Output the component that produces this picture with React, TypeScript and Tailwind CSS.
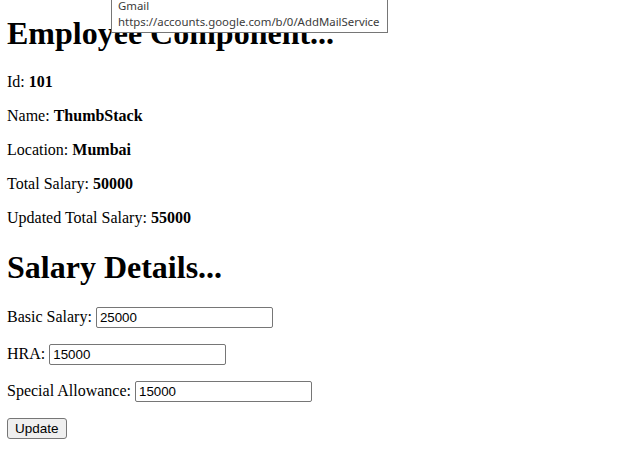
import React from "react";

export default function App() {
  const serif = { fontFamily: '"Liberation Serif", "Times New Roman", serif' };
  return (
    <div className="relative min-h-[471px] bg-white text-black" style={serif}>
      <div className="pl-[7px] pr-2 pt-[15px]">
        <h1 className="m-0 mb-[21.44px] text-[32px] font-bold leading-[normal]">Employee Component...</h1>
        <p className="my-4 text-base leading-[normal]">Id: <b>101</b></p>
        <p className="my-4 text-base leading-[normal]">Name: <b>ThumbStack</b></p>
        <p className="my-4 text-base leading-[normal]">Location: <b>Mumbai</b></p>
        <p className="my-4 text-base leading-[normal]">Total Salary: <b>50000</b></p>
        <p className="my-4 text-base leading-[normal]">Updated Total Salary: <b>55000</b></p>
        <h1 className="my-[21.44px] text-[32px] font-bold leading-[normal]">Salary Details...</h1>
        {[
          ["Basic Salary:", "25000"],
          ["HRA:", "15000"],
          ["Special Allowance:", "15000"],
        ].map(([label, val]) => (
          <p key={label} className="my-4 text-base leading-[normal]">
            {label}{" "}
            <input
              readOnly
              value={val}
              className="h-[21px] w-[177px] rounded-[2px] border border-[#767676] bg-white px-[3px] py-[2px] text-[13.33px] leading-[normal] text-black outline-none"
              style={{ fontFamily: '"Liberation Sans", Arial, sans-serif' }}
            />
          </p>
        ))}
        <p className="my-4 text-base leading-[normal]">
          <button
            className="h-[21px] rounded-[3px] border border-[#767676] bg-[#efefef] px-[7px] text-[13.5px] leading-[normal] text-black"
            style={{ fontFamily: '"Liberation Sans", Arial, sans-serif' }}
          >
            Update
          </button>
        </p>
      </div>
      <div
        className="absolute left-[111px] top-[-8px] w-[277px] border border-[#767676] bg-white px-[6px] pt-[5px] pb-[2px] text-[11.4px] leading-[16px] text-[#3b3b3b]"
        style={{ fontFamily: '"Noto Sans", "Open Sans", sans-serif' }}
      >
        <div>Gmail</div>
        <div>https://accounts.google.com/b/0/AddMailService</div>
      </div>
    </div>
  );
}
